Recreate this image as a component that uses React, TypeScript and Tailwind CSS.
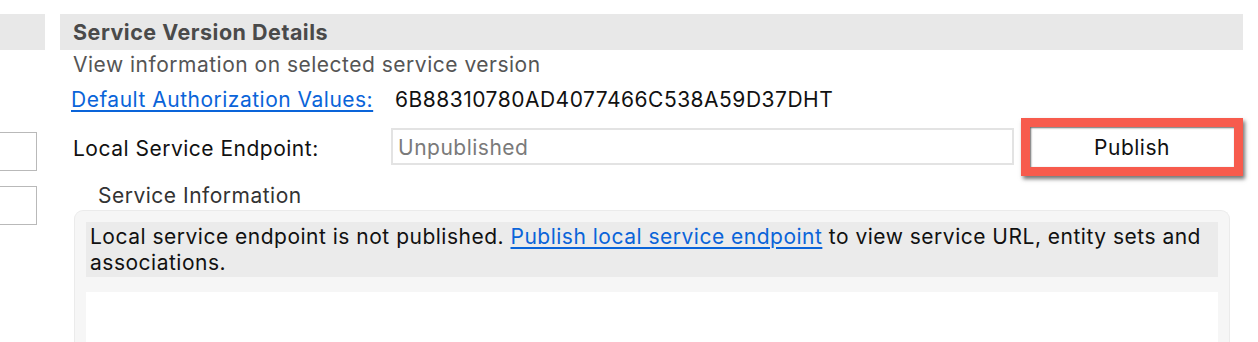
export default function App() {
  return (
    <div className="w-[1258px] h-[342px] bg-white overflow-hidden flex pt-[14px] font-['Inter',sans-serif] text-[21px] tracking-[0.5px]">
      <div className="w-[45px] shrink-0 flex flex-col">
        <div className="h-[36px] bg-[#e8e8e8]" />
        <div className="mt-[82px] w-[37px] h-[39px] border-[1.5px] border-l-0 border-[#b9b9b9]" />
        <div className="mt-[15px] w-[37px] h-[39px] border-[1.5px] border-l-0 border-[#b9b9b9]" />
      </div>
      <div className="ml-[15px] w-[1183px] shrink-0 flex flex-col">
        <div className="h-[36px] bg-[#e8e8e8] pl-[13px] flex items-center font-bold text-[21.5px] text-[#4a4a4a]">
          Service Version Details
        </div>
        <div className="mt-[4px] pl-[13px] leading-[22px] text-[#555555]">
          View information on selected service version
        </div>
        <div className="mt-[13px] pl-[11px] leading-[22px] flex">
          <a href="#" className="text-[#0a64d9] underline underline-offset-[3px] w-[324px] shrink-0">
            Default Authorization Values:
          </a>
          <span className="text-[#111111]">6B88310780AD4077466C538A59D37DHT</span>
        </div>
        <div className="mt-[7px] h-[58px] flex items-center">
          <div className="pl-[13px] pt-[3px] w-[331px] shrink-0 text-[#111111]">Local Service Endpoint:</div>
          <div className="w-[626px] h-[37px] border-2 border-[#e3e3e3] flex items-center pl-[5px] pt-[3px] text-[#7a7a7a] -mt-[2px]">
            Unpublished
          </div>
          <div className="ml-[7px] w-[222px] h-[58px] shrink-0 border-[9px] border-[#f75b4d] shadow-[2px_3px_4px_rgba(0,0,0,0.55)]">
            <div className="w-full h-full bg-white shadow-[inset_1px_1px_2px_rgba(0,0,0,0.6)] flex items-center justify-center pt-[1px] text-[#111111]">
              Publish
            </div>
          </div>
        </div>
        <div className="mt-[9px] pl-[38px] leading-[22px] text-[#333333]">Service Information</div>
        <div className="mt-[3px] ml-[14px] w-[1156px] flex-1 bg-[#f6f6f6] border border-[#ebebeb] border-b-0 rounded-t-[9px] px-[11px] pt-[11px] flex flex-col">
          <div className="h-[55px] bg-[#ebebeb] pl-[4px] pr-[8px] pt-[2px] leading-[26px] text-[#111111]">
            Local service endpoint is not published.{" "}
            <a href="#" className="text-[#0a64d9] underline underline-offset-[3px]">Publish local service endpoint</a>{" "}
            to view service URL, entity sets and associations.
          </div>
          <div className="mt-[15px] flex-1 bg-white" />
        </div>
      </div>
    </div>
  );
}
